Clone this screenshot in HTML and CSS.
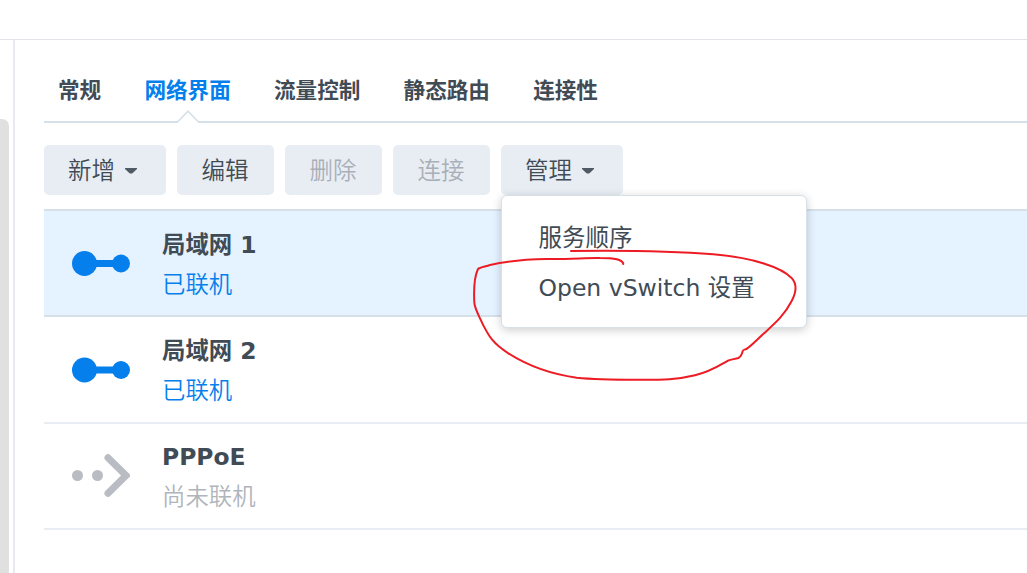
FILE: index.html
```
<!DOCTYPE html>
<html lang="zh-CN">
<head>
  <meta charset="UTF-8">
  <meta name="viewport" content="width=device-width, initial-scale=1.0">
  <title>网络界面</title>
  <link rel="stylesheet" href="styles.css">
</head>
<body>
  <header class="topbar"></header>

  <div class="main">
    <aside class="sidebar">
      <div class="scrollbar"></div>
    </aside>

    <section class="content">
      <nav class="tabs">
        <a class="tab">常规</a>
        <a class="tab active">网络界面
          <svg class="tab-arrow" width="24" height="13" viewBox="0 0 24 13">
            <path d="M1.5 13V11.9L12 1.2L22.5 11.9V13Z" fill="#fff"/>
            <path d="M0 12H1.5L12 1.2L22.5 12H24" fill="none" stroke="#d6e0e8" stroke-width="1.6"/>
          </svg>
        </a>
        <a class="tab">流量控制</a>
        <a class="tab">静态路由</a>
        <a class="tab">连接性</a>
      </nav>

      <div class="toolbar">
        <button class="btn btn-menu">新增<svg class="caret" width="12" height="6" viewBox="0 0 12 6"><path d="M0 0H12V1L7.5 5.2Q6 6 4.5 5.2L0 1Z"/></svg></button>
        <button class="btn">编辑</button>
        <button class="btn" disabled>删除</button>
        <button class="btn" disabled>连接</button>
        <div class="dropdown">
          <button class="btn btn-menu">管理<svg class="caret" width="12" height="6" viewBox="0 0 12 6"><path d="M0 0H12V1L7.5 5.2Q6 6 4.5 5.2L0 1Z"/></svg></button>
          <ul class="menu">
            <li>服务顺序</li>
            <li>Open vSwitch 设置</li>
          </ul>
        </div>
      </div>

      <ul class="list">
        <li class="row selected">
          <svg class="icon" width="58" height="44" viewBox="0 0 58 44" fill="#057feb">
            <circle cx="12.5" cy="22.5" r="12.5"/>
            <circle cx="49" cy="22.5" r="9"/>
            <rect x="20" y="19" width="25" height="7"/>
          </svg>
          <div class="info">
            <div class="name">局域网 1</div>
            <div class="status on">已联机</div>
          </div>
        </li>
        <li class="row">
          <svg class="icon" width="58" height="44" viewBox="0 0 58 44" fill="#057feb">
            <circle cx="12.5" cy="22" r="12.5"/>
            <circle cx="49" cy="22" r="9"/>
            <rect x="20" y="18.5" width="25" height="7"/>
          </svg>
          <div class="info">
            <div class="name">局域网 2</div>
            <div class="status on">已联机</div>
          </div>
        </li>
        <li class="row">
          <svg class="icon" width="58" height="44" viewBox="0 0 58 44" fill="#b9bdc3">
            <circle cx="5.5" cy="21.5" r="5.5"/>
            <circle cx="25.5" cy="21.5" r="5.5"/>
            <path d="M36 3.8L54 21.5L36 39.2" fill="none" stroke="#b9bdc3" stroke-width="7" stroke-linecap="round"/>
          </svg>
          <div class="info">
            <div class="name">PPPoE</div>
            <div class="status">尚未联机</div>
          </div>
        </li>
      </ul>
    </section>
  </div>

  <!-- hand-drawn marker -->
  <svg class="marker" width="360" height="200" viewBox="0 0 1080 600">
    <path d="M333 183C500 181 650 184 760 193C880 203 965 232 996 265C1012 284 1010 305 995 333C973 376 945 400 912 430C890 450 870 471 859 477C853 480 849 478 848 484C845 496 842 501 835 504C825 508 814 507 804 512C780 525 755 544 705 556C650 570 600 569 530 569C470 569 400 568 350 563C270 552 200 525 145 490C95 458 85 435 68 402C52 368 44 355 43 338C41 300 43 260 54 237C60 231 75 230 90 225C150 211 200 208 260 207C330 208 380 203 420 204C465 204 488 208 490 222"/>
  </svg>
</body>
</html>
```
FILE: styles.css
```
* {
  box-sizing: border-box;
}

body {
  margin: 0;
  height: 573px;
  display: flex;
  flex-direction: column;
  overflow: hidden;
  background-color: #fff;
  color: #414b55;
  font-family: "DejaVu Sans", "Noto Sans CJK SC", sans-serif;
  font-size: 23.4px;
}

ul {
  margin: 0;
  padding: 0;
  list-style: none;
}

.topbar {
  height: 40px;
  flex: none;
  border-bottom: 1px solid #e1e5e9;
}

.main {
  flex: 1;
  display: flex;
}

.sidebar {
  width: 15px;
  flex: none;
  padding-top: 79px;
  border-right: 2px solid #e7ebf1;
  display: flex;
}

.scrollbar {
  width: 9px;
  background-color: #e0e0e0;
  border-top-right-radius: 7px;
}

.content {
  flex: 1;
  padding-left: 29px;
}

.tabs {
  display: flex;
  gap: 43.2px;
  height: 83px;
  padding: 0 14px;
  border-bottom: 2px solid #d6e0e8;
}

.tab {
  position: relative;
  height: 81px;
  line-height: 98px;
  font-family: "Noto Sans CJK SC", sans-serif;
  font-size: 21.6px;
  font-weight: bold;
  white-space: nowrap;
}

.tab.active {
  color: #057feb;
}

.tab-arrow {
  position: absolute;
  left: 50%;
  bottom: -2px;
  margin-left: -12px;
}

.toolbar {
  display: flex;
  gap: 11px;
  padding: 22px 0 14px;
}

.btn {
  display: flex;
  align-items: center;
  justify-content: center;
  width: 97px;
  height: 50px;
  padding: 0 1px 2px 0;
  border: none;
  border-radius: 5px;
  background-color: #e8edf4;
  color: #414b55;
  font-family: "Noto Sans CJK SC", sans-serif;
  font-size: 23.5px;
  font-weight: 350;
}

.btn:disabled {
  color: #a8afb8;
}

.btn-menu {
  width: 122px;
  padding-right: 5px;
}

.caret {
  margin: 3px 0 0 10px;
  fill: #505a64;
}

.dropdown {
  position: relative;
}

.menu {
  position: absolute;
  top: 50px;
  left: 0;
  z-index: 1;
  width: 306px;
  height: 133px;
  padding: 17px 36.5px;
  border: 1px solid #d6e0e8;
  border-radius: 6px;
  background-color: #fff;
  box-shadow: 0 2px 10px rgba(0, 0, 0, 0.2);
  font-size: 23.5px;
  white-space: nowrap;
}

.menu li {
  height: 50px;
  line-height: 50px;
}

.list {
  border-top: 2px solid #d6e0e8;
}

.row {
  display: flex;
  align-items: center;
  gap: 32px;
  height: 106px;
  padding-left: 28px;
  border-bottom: 2px solid #e7edf2;
}

.row.selected {
  background-color: #e5f2ff;
  border-color: #d6e0e8;
}

.row.selected + .row {
  height: 107px;
}

.icon {
  display: block;
}

.info {
  padding-top: 1px;
}

.row:last-child .info {
  padding-top: 0;
}

.name,
.status {
  height: 38px;
  line-height: 38px;
}

.name {
  font-weight: bold;
}

.status {
  color: #b0b5bb;
  font-family: "Noto Sans CJK SC", sans-serif;
  font-weight: 350;
}

.status.on {
  color: #057feb;
}

.marker {
  position: absolute;
  top: 190px;
  left: 460px;
  z-index: 2;
  fill: none;
  stroke: #ed1c24;
  stroke-width: 6;
  stroke-linecap: round;
}
```
